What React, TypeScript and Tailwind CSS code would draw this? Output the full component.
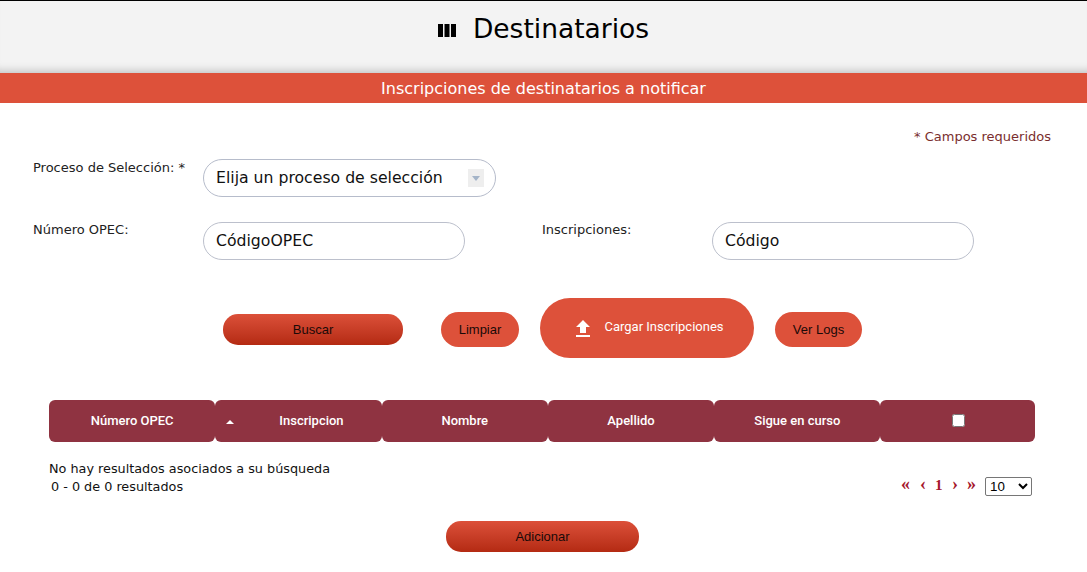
// Destinatarios: formulario de inscripciones a notificar.
const COLUMNS = ['Número OPEC', 'Inscripcion', 'Nombre', 'Apellido', 'Sigue en curso'];

const VERDANA = 'font-["DejaVu_Sans",sans-serif]';

function GradientButton({ label, width }: { label: string; width: string }) {
  return (
    <button
      className={`${width} h-[31px] pt-[1px] rounded-[15px] bg-gradient-to-b from-[#dc5039] to-[#b42a12] text-[13px] text-[#1a0a08] font-["Liberation_Sans",sans-serif]`}
    >
      {label}
    </button>
  );
}

function FlatButton({ label, width }: { label: string; width: string }) {
  return (
    <button
      className={`${width} h-[35px] pt-[1px] rounded-[18px] bg-[#dd513a] text-[13px] text-[#1a0a08] font-["Liberation_Sans",sans-serif]`}
    >
      {label}
    </button>
  );
}

export default function App() {
  return (
    <div className={`w-[1087px] h-[572px] overflow-hidden bg-white ${VERDANA}`}>
      <header className="h-[73px] border-t border-black bg-[#f3f3f3] shadow-[inset_0_-10px_8px_-8px_rgba(0,0,0,0.22)] flex items-start justify-center pt-[12px]">
        <div className="flex items-center gap-[17px] text-black">
          <svg width="18" height="13" viewBox="0 0 18 13" fill="currentColor" className="mt-[2px]">
            <rect x="0" y="0" width="5" height="13" />
            <rect x="6.5" y="0" width="5" height="13" />
            <rect x="13" y="0" width="5" height="13" />
          </svg>
          <h1 className="text-[26.5px] leading-[32px]">Destinatarios</h1>
        </div>
      </header>

      <div className="h-[30px] bg-[#dd513a] text-white text-[16px] leading-[31px] text-center">
        Inscripciones de destinatarios a notificar
      </div>

      <div className="pt-[26px] pr-[36px] text-right text-[13px] leading-[16px] text-[#7a2e2e]">
        * Campos requeridos
      </div>

      <div className="mt-[14px] pl-[33px] flex items-start">
        <label className="w-[170px] pt-[1px] text-[13px] leading-[16px] text-[#222]">Proceso de Selección: *</label>
        <div className="w-[293px] h-[38px] rounded-[19px] border border-[#b6bccb] pl-[12px] pr-[11px] flex items-center justify-between text-[15.7px] text-[#111]">
          <span>Elija un proceso de selección</span>
          <span className="w-[16px] h-[18px] bg-[#eeeeee] flex items-center justify-center">
            <span className="w-0 h-0 border-x-[4px] border-x-transparent border-t-[5px] border-t-[#a4b4c8]" />
          </span>
        </div>
      </div>

      <div className="mt-[25px] pl-[33px] flex items-start">
        <label className="w-[170px] text-[13px] leading-[16px] text-[#222]">Número OPEC:</label>
        <div className="w-[262px] h-[38px] rounded-[19px] border border-[#bcc0cc] pl-[12px] flex items-center text-[15.7px] text-[#111]">
          CódigoOPEC
        </div>
        <label className="ml-[77px] w-[170px] text-[13px] leading-[16px] text-[#222]">Inscripciones:</label>
        <div className="w-[262px] h-[38px] rounded-[19px] border border-[#bcc0cc] pl-[12px] flex items-center text-[15.7px] text-[#111]">
          Código
        </div>
      </div>

      <div className="mt-[38px] pl-[223px] h-[60px] flex items-center">
        <div className="mt-[2px]">
          <GradientButton label="Buscar" width="w-[180px]" />
        </div>
        <div className="ml-[38px] mt-[2px]">
          <FlatButton label="Limpiar" width="w-[78px]" />
        </div>
        <button className='ml-[21px] w-[214px] h-[60px] pl-[1px] rounded-[30px] bg-[#dd513a] text-white text-[13px] font-["Roboto",sans-serif] flex items-center justify-center gap-[9px]'>
          <svg width="24" height="24" viewBox="0 0 24 24" fill="currentColor" className="mt-[1px]">
            <path d="M9 16h6v-6h4l-7-7-7 7h4zm-4 2h14v2H5z" />
          </svg>
          <span className="-mt-[3px]">Cargar Inscripciones</span>
        </button>
        <div className="ml-[21px] mt-[2px]">
          <FlatButton label="Ver Logs" width="w-[87px]" />
        </div>
      </div>

      <div className="mt-[42px] ml-[49px] w-[986px] h-[42px] flex text-white text-[13px] font-medium font-['Roboto',sans-serif]">
        {COLUMNS.map((col, i) => (
          <div
            key={col}
            className={`relative w-[166.3px] h-full rounded-[6px] bg-[#8f3341] flex items-center justify-center ${i === 1 ? 'pl-[26px]' : ''}`}
          >
            {i === 1 && (
              <span className="absolute left-[11px] top-[20px] w-0 h-0 border-x-[4px] border-x-transparent border-b-[4px] border-b-white" />
            )}
            {col}
          </div>
        ))}
        <div className="flex-1 h-full pl-[1px] rounded-[6px] bg-[#8f3341] flex items-center justify-center">
          <input type="checkbox" className="w-[13px] h-[13px] -mt-[2px]" />
        </div>
      </div>

      <div className="mt-[18px] ml-[49px] w-[983px] flex items-start justify-between text-[12.8px] leading-[18px] text-[#111]">
        <div>
          <p>No hay resultados asociados a su búsqueda</p>
          <p className="ml-[2px]">0 - 0 de 0 resultados</p>
        </div>
        <div className="mt-[17px] flex items-center text-[#a5162c] font-bold font-['Liberation_Serif',serif]">
          <span className="text-[18px] leading-[18px] w-[19px] -mt-[5px]">«</span>
          <span className="text-[18px] leading-[18px] w-[15px] -mt-[5px]">‹</span>
          <span className="text-[15px] leading-[18px] w-[17px] -mt-[4px]">1</span>
          <span className="text-[18px] leading-[18px] w-[15px] -mt-[5px]">›</span>
          <span className="text-[18px] leading-[18px] w-[18px] -mt-[5px]">»</span>
          <select className="w-[47px] h-[19px] border border-[#767676] rounded-[2px] bg-white text-[13.33px] text-black font-normal font-['Liberation_Sans',sans-serif]">
            <option>10</option>
          </select>
        </div>
      </div>

      <div className="mt-[25px] ml-[446px]">
        <GradientButton label="Adicionar" width="w-[193px]" />
      </div>
    </div>
  );
}
